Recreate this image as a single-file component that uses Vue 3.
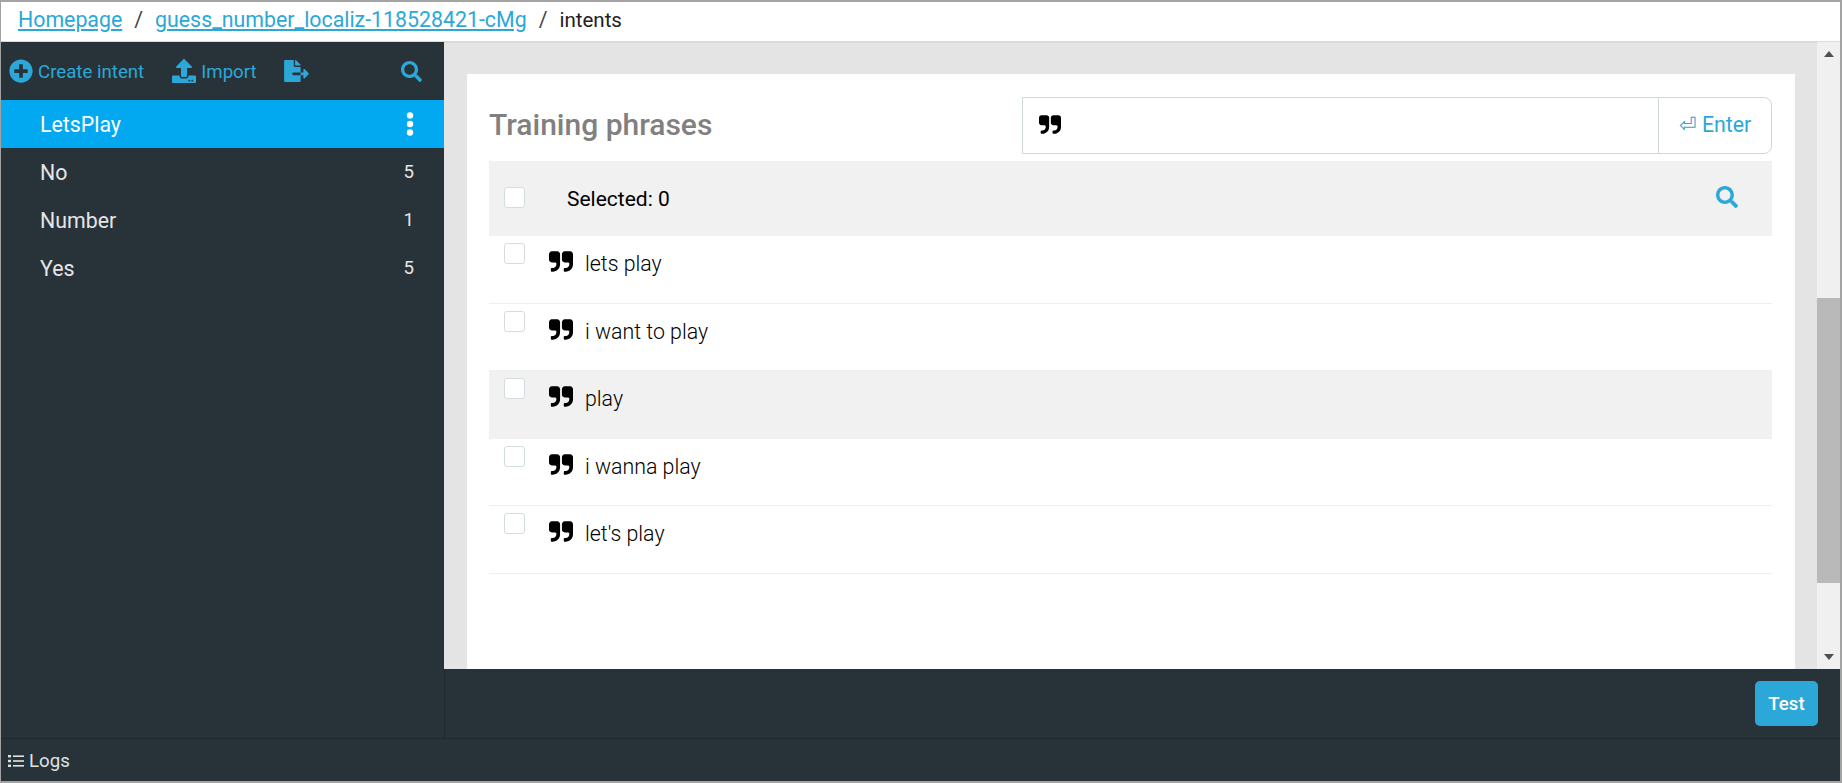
<script setup>
const intents = [
  { name: 'LetsPlay', active: true },
  { name: 'No', count: 5 },
  { name: 'Number', count: 1 },
  { name: 'Yes', count: 5 },
]

const phrases = [
  { text: 'lets play' },
  { text: 'i want to play' },
  { text: 'play', hover: true },
  { text: 'i wanna play' },
  { text: "let's play" },
]

const quotePath = 'M832 320v704q0 104-40.5 198.5t-109.5 163.5-163.5 109.5-198.5 40.5h-64q-26 0-45-19t-19-45v-128q0-26 19-45t45-19h64q106 0 181-75t75-181v-32q0-40-28-68t-68-28h-224q-80 0-136-56t-56-136v-384q0-80 56-136t136-56h384q80 0 136 56t56 136zm896 0v704q0 104-40.5 198.5t-109.5 163.5-163.5 109.5-198.5 40.5h-64q-26 0-45-19t-19-45v-128q0-26 19-45t45-19h64q106 0 181-75t75-181v-32q0-40-28-68t-68-28h-224q-80 0-136-56t-56-136v-384q0-80 56-136t136-56h384q80 0 136 56t56 136z'
const searchPath = 'M505 442.7L405.3 343c-4.5-4.5-10.6-7-17-7H372c27.6-35.3 44-79.7 44-128C416 93.1 322.9 0 208 0S0 93.1 0 208s93.1 208 208 208c48.3 0 92.7-16.4 128-44v16.3c0 6.4 2.5 12.5 7 17l99.7 99.7c9.4 9.4 24.6 9.4 33.9 0l28.3-28.3c9.4-9.4 9.4-24.6.1-34zM208 336c-70.7 0-128-57.2-128-128 0-70.7 57.2-128 128-128 70.7 0 128 57.2 128 128 0 70.7-57.2 128-128 128z'
</script>

<template>
  <div class="page">
    <nav class="crumbs">
      <a class="crumb-link">Homepage</a>
      <span class="crumb-sep">/</span>
      <a class="crumb-link">guess_number_localiz-118528421-cMg</a>
      <span class="crumb-sep">/</span>
      <span class="crumb-current">intents</span>
    </nav>

    <div class="body">
      <aside class="sidebar">
        <div class="toolbar">
          <svg class="tool-icon" viewBox="0 0 512 512"><path d="M256 8C119 8 8 119 8 256s111 248 248 248 248-111 248-248S393 8 256 8zm144 276c0 6.6-5.4 12-12 12h-92v92c0 6.6-5.4 12-12 12h-56c-6.6 0-12-5.4-12-12v-92h-92c-6.6 0-12-5.4-12-12v-56c0-6.6 5.4-12 12-12h92v-92c0-6.6 5.4-12 12-12h56c6.6 0 12 5.4 12 12v92h92c6.6 0 12 5.4 12 12v56z" /></svg>
          <span class="tool-label create">Create intent</span>
          <svg class="tool-icon" viewBox="0 0 512 512"><path d="M296 384h-80c-13.3 0-24-10.7-24-24V192h-87.7c-17.8 0-26.7-21.5-14.1-34.1L242.3 5.7c7.5-7.5 19.8-7.5 27.3 0l152.2 152.2c12.6 12.6 3.7 34.1-14.1 34.1H320v168c0 13.3-10.7 24-24 24zm216-8v112c0 13.3-10.7 24-24 24H24c-13.3 0-24-10.7-24-24V376c0-13.3 10.7-24 24-24h136v8c0 30.9 25.1 56 56 56h80c30.9 0 56-25.1 56-56v-8h136c13.3 0 24 10.7 24 24zm-124 88c0-11-9-20-20-20s-20 9-20 20 9 20 20 20 20-9 20-20zm64 0c0-11-9-20-20-20s-20 9-20 20 9 20 20 20 20-9 20-20z" /></svg>
          <span class="tool-label import">Import</span>
          <svg class="tool-icon export" viewBox="0 0 576 512"><path d="M384 121.9c0-6.3-2.5-12.4-7-16.9L279.1 7c-4.5-4.5-10.6-7-17-7H256v128h128zM571 308l-95.7-96.4c-10.1-10.1-27.4-3-27.4 11.3V288h-64v64h64v65.2c0 14.3 17.3 21.4 27.4 11.3L571 332c6.6-6.6 6.6-17.4 0-24zm-379 28v-32c0-8.8 7.2-16 16-16h176V160H248c-13.2 0-24-10.8-24-24V0H24C10.7 0 0 10.7 0 24v464c0 13.3 10.7 24 24 24h336c13.3 0 24-10.7 24-24V352H208c-8.8 0-16-7.2-16-16z" /></svg>
          <svg class="tool-search" viewBox="0 0 512 512"><path :d="searchPath" /></svg>
        </div>
        <div
          v-for="item in intents"
          :key="item.name"
          class="intent"
          :class="{ active: item.active }"
        >
          <span>{{ item.name }}</span>
          <span v-if="item.count" class="count">{{ item.count }}</span>
          <svg v-else class="kebab" viewBox="0 0 8 24">
            <circle cx="4" cy="3.5" r="3.2" />
            <circle cx="4" cy="12" r="3.2" />
            <circle cx="4" cy="20.5" r="3.2" />
          </svg>
        </div>
      </aside>

      <main class="main">
        <div class="scroll-area">
          <div class="content">
            <section class="card">
              <div class="card-head">
                <h2 class="title">Training phrases</h2>
                <div class="phrase-input">
                  <div class="input-field">
                    <svg class="input-quote" viewBox="64 128 1664 1408"><path :d="quotePath" /></svg>
                  </div>
                  <div class="enter">⏎ Enter</div>
                </div>
              </div>

              <div class="table-head">
                <span class="check head-check"></span>
                <span class="selected">Selected: 0</span>
                <svg class="head-search" viewBox="0 0 512 512"><path :d="searchPath" /></svg>
              </div>

              <div
                v-for="row in phrases"
                :key="row.text"
                class="row"
                :class="{ hover: row.hover }"
              >
                <span class="check"></span>
                <svg class="quote" viewBox="64 128 1664 1408"><path :d="quotePath" /></svg>
                <span class="phrase">{{ row.text }}</span>
              </div>
            </section>
          </div>

          <div class="scrollbar">
            <svg class="arrow" viewBox="0 0 12 8"><path d="M6 1l5 6H1z" /></svg>
            <div class="thumb"></div>
            <svg class="arrow" viewBox="0 0 12 8"><path d="M1 1h10L6 7z" /></svg>
          </div>
        </div>

        <div class="test-bar">
          <button class="test-btn">Test</button>
        </div>
      </main>
    </div>

    <footer class="logs">
      <svg class="logs-icon" viewBox="0 0 16 14">
        <rect x="0" y="1" width="3" height="2.4" />
        <rect x="0" y="5.8" width="3" height="2.4" />
        <rect x="0" y="10.6" width="3" height="2.4" />
        <rect x="5" y="1.4" width="11" height="1.6" />
        <rect x="5" y="6.2" width="11" height="1.6" />
        <rect x="5" y="11" width="11" height="1.6" />
      </svg>
      <span>Logs</span>
    </footer>
  </div>
</template>

<style scoped>
.page {
  box-sizing: border-box;
  width: 1842px;
  height: 783px;
  display: flex;
  flex-direction: column;
  border-style: solid;
  border-color: #a3a3a3;
  border-width: 2px 2px 2px 1px;
  font-family: Roboto, "Liberation Sans", sans-serif;
  background: #263238;
}

.crumbs {
  box-sizing: border-box;
  height: 40px;
  flex-shrink: 0;
  display: flex;
  align-items: center;
  padding: 0 0 4px 17px;
  background: #fff;
  border-bottom: 1px solid #d8dcdc;
  font-size: 21.33px;
  color: #444;
}
.crumb-link {
  color: #2ba8d8;
  text-decoration: underline;
}
.crumb-sep {
  margin: 0 12px;
}
.crumb-current {
  color: #222;
  font-size: 20.5px;
}

.body {
  flex: 1;
  min-height: 0;
  display: flex;
}

.sidebar {
  width: 443px;
  flex-shrink: 0;
  background: #283339;
  border-bottom: 1px solid #1f292e;
}
.toolbar {
  height: 58px;
  display: flex;
  align-items: center;
  padding: 0 22px 0 8px;
  color: #2ba8d8;
  font-size: 18.67px;
}
.tool-icon {
  width: 24px;
  height: 24px;
  fill: #2ba8d8;
}
.tool-icon.export {
  width: 25px;
  height: 22px;
}
.tool-label {
  margin-left: 5px;
  padding-top: 1px;
}
.tool-label.create {
  margin-right: 28px;
}
.tool-label.import {
  margin-right: 27px;
}
.tool-search {
  width: 21px;
  height: 21px;
  margin-left: auto;
  fill: #2ba8d8;
}

.intent {
  height: 48px;
  display: flex;
  align-items: center;
  justify-content: space-between;
  padding: 0 30px 0 39px;
  font-size: 21.33px;
  color: #e4e6e7;
}
.intent.active {
  background: #02a9f1;
  color: #fff;
}
.count {
  font-size: 18.67px;
}
.kebab {
  width: 8px;
  height: 24px;
  fill: #fff;
}

.main {
  flex: 1;
  min-width: 0;
  display: flex;
  flex-direction: column;
}
.scroll-area {
  flex: 1;
  min-height: 0;
  display: flex;
}
.content {
  flex: 1;
  min-width: 0;
  padding: 31px 22px 0 23px;
  background: #e4e4e4;
  border-top: 1px solid #d4d8d8;
}
.card {
  height: 100%;
  box-sizing: border-box;
  background: #fff;
  padding: 23px 23px 0 22px;
}
.card-head {
  height: 64px;
  display: flex;
  justify-content: space-between;
}
.title {
  margin: 0;
  padding-top: 10px;
  font-size: 30px;
  font-weight: 500;
  color: #808080;
}
.phrase-input {
  box-sizing: border-box;
  width: 750px;
  height: 57px;
  display: flex;
  border: 1px solid #ced8db;
  border-radius: 0 8px 8px 0;
}
.input-field {
  flex: 1;
  display: flex;
  align-items: center;
  padding-left: 16px;
}
.input-quote {
  width: 22px;
  height: 19px;
  margin-top: -2px;
  fill: #000;
}
.enter {
  width: 112px;
  display: flex;
  align-items: center;
  justify-content: center;
  padding-bottom: 2px;
  border-left: 1px solid #ced8db;
  color: #2ba8d8;
  font-size: 21.33px;
}

.table-head {
  height: 75px;
  display: flex;
  align-items: center;
  position: relative;
  background: #f1f1f1;
}
.check {
  box-sizing: border-box;
  width: 21px;
  height: 21px;
  flex-shrink: 0;
  margin-left: 15px;
  background: #fff;
  border: 1px solid #d3dcde;
  border-radius: 3px;
}
.head-check {
  margin-top: -3px;
}
.selected {
  margin-left: 42px;
  font-size: 21px;
  color: #000;
}
.head-search {
  width: 22px;
  height: 22px;
  margin-left: auto;
  margin-right: 34px;
  margin-top: -3px;
  fill: #2ba8d8;
}

.row {
  box-sizing: border-box;
  height: 67.5px;
  display: flex;
  align-items: flex-start;
  padding-top: 7px;
  border-bottom: 1px solid #eef0f0;
}
.row.hover {
  background: #f1f1f1;
  border-bottom-color: #f1f1f1;
}
.quote {
  width: 24px;
  height: 21px;
  margin: 8px 0 0 24px;
  fill: #000;
}
.phrase {
  margin: 8px 0 0 12px;
  font-size: 21.33px;
  font-weight: 300;
  color: #000;
}

.scrollbar {
  width: 23px;
  flex-shrink: 0;
  display: flex;
  flex-direction: column;
  align-items: center;
  background: #f0f0f0;
}
.arrow {
  width: 12px;
  height: 8px;
  flex-shrink: 0;
  margin: 8px 0;
  fill: #505050;
}
.thumb {
  width: 100%;
  height: 285px;
  margin-top: auto;
  margin-bottom: 62px;
  background: #b9b9b9;
}

.test-bar {
  height: 70px;
  flex-shrink: 0;
  box-sizing: border-box;
  display: flex;
  justify-content: flex-end;
  padding: 12px 22px 0 0;
  background: #283339;
  border-left: 1px solid #1f292e;
  border-bottom: 1px solid #1f292e;
}
.test-btn {
  width: 63px;
  height: 45px;
  padding: 0;
  border: none;
  border-radius: 5px;
  background: #2ba8d8;
  color: #fff;
  font-family: inherit;
  font-size: 18.67px;
  font-weight: 500;
}

.logs {
  height: 42px;
  flex-shrink: 0;
  box-sizing: border-box;
  display: flex;
  align-items: center;
  padding: 1px 0 0 7px;
  background: #283339;
  color: #dfe2e3;
  font-size: 18.67px;
}
.logs-icon {
  width: 16px;
  height: 14px;
  margin-right: 5px;
  fill: #dfe2e3;
}
</style>

<style>
html,
body {
  margin: 0;
  overflow: hidden;
}
</style>
